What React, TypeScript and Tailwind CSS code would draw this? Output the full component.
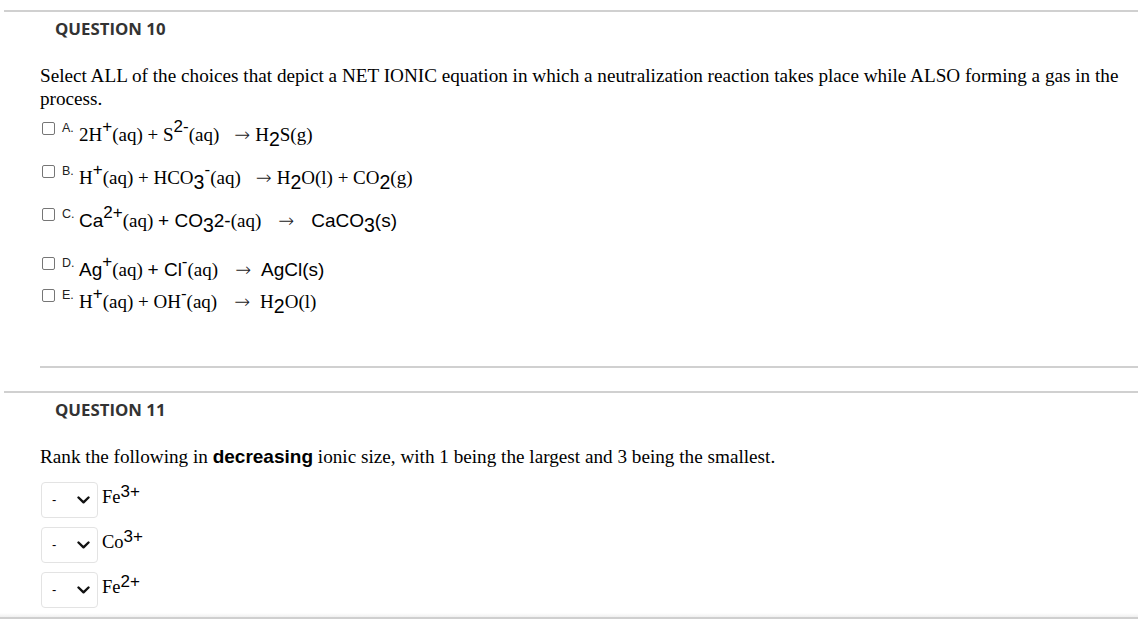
import React from "react";

const serif = { fontFamily: '"Liberation Serif", "Times New Roman", serif' };

function Sup({ children }: { children: React.ReactNode }) {
  return (
    <span className="relative top-[-9px] font-['Liberation_Sans',Arial,sans-serif] text-[17px] leading-none">
      {children}
    </span>
  );
}
function Sub({ children }: { children: React.ReactNode }) {
  return (
    <span className="relative top-[5px] font-['Liberation_Sans',Arial,sans-serif] text-[19.5px] leading-none">
      {children}
    </span>
  );
}
function Arrow({ l, r }: { l: string; r: string }) {
  return (
    <span className={`inline-block font-['DejaVu_Sans',sans-serif] text-[19px] font-extralight leading-none text-[#222] ${l} ${r}`}>→</span>
  );
}
function S({ children }: { children: React.ReactNode }) {
  return <span className="font-['Liberation_Sans',Arial,sans-serif]">{children}</span>;
}

function Option({ letter, children, h }: { letter: string; children: React.ReactNode; h: string }) {
  return (
    <div className={`flex items-start ${h}`}>
      <span className="ml-[2px] mt-[1px] h-[13px] w-[13px] shrink-0 rounded-[2px] border border-[#767676] bg-white" />
      <span className="ml-[7px] mt-[1px] w-[17px] shrink-0 font-['Liberation_Sans',Arial,sans-serif] text-[12.5px] leading-none text-[#222]">
        {letter}
      </span>
      <span className="mt-[4px] whitespace-nowrap text-[19px] leading-[20px] text-black" style={serif}>
        {children}
      </span>
    </div>
  );
}

function Select() {
  return (
    <div className="flex h-[36px] w-[57px] shrink-0 items-center justify-between rounded-[4px] border border-[#e3e3e3] bg-white pl-[10px] pr-[7px]">
      <span className="font-['Liberation_Sans',Arial,sans-serif] text-[13px] text-black">-</span>
      <svg width="13" height="8" viewBox="0 0 13 8">
        <path d="M1.5 1.5 L6.5 6.3 L11.5 1.5" fill="none" stroke="#111" strokeWidth="2.4" strokeLinecap="round" strokeLinejoin="round" />
      </svg>
    </div>
  );
}

export default function App() {
  return (
    <div className="relative h-[619px] w-[1138px] overflow-hidden bg-white">
      <div className="h-[10px]" />
      <div className="ml-[4px] h-[2px] bg-[#d0d0d0]" />
      <div className="pl-[55px] pt-[6px] font-['Open_Sans',sans-serif] text-[16.8px] font-bold leading-[22px] text-[#333]">
        QUESTION 10
      </div>
      <div className="pl-[40px] pt-[24px]">
        <p className="text-[19.2px] leading-[23px] text-black" style={serif}>
          Select ALL of the choices that depict a NET IONIC equation in which a neutralization reaction takes place while ALSO forming a gas in the process.
        </p>
        <div className="mt-[11px]">
          <Option letter="A." h="h-[43px]">
            2H<Sup>+</Sup>(aq) + S<Sup>2-</Sup>(aq)
            <Arrow l="ml-[15px]" r="mr-[5px]" />
            H<Sub>2</Sub>S(g)
          </Option>
          <Option letter="B." h="h-[43px]">
            H<Sup>+</Sup>(aq) + HCO<Sub>3</Sub>
            <Sup>-</Sup>(aq)
            <Arrow l="ml-[15px]" r="mr-[5px]" />
            H<Sub>2</Sub>O(l) + CO<Sub>2</Sub>(g)
          </Option>
          <Option letter="C." h="h-[49px]">
            <S>Ca</S>
            <Sup>2+</Sup>(aq) <S>+ CO</S>
            <Sub>3</Sub>
            <S>2-</S>(aq)
            <Arrow l="ml-[17px]" r="mr-[17px]" />
            <S>CaCO</S>
            <Sub>3</Sub>
            <S>(s)</S>
          </Option>
          <Option letter="D." h="h-[32px]">
            <S>Ag</S>
            <Sup>+</Sup>(aq) <S>+ Cl</S>
            <Sup>-</Sup>(aq)
            <Arrow l="ml-[17px]" r="mr-[10px]" />
            <S>AgCl(s)</S>
          </Option>
          <Option letter="E." h="h-[30px]">
            H<Sup>+</Sup>(aq) + OH<Sup>-</Sup>(aq)
            <Arrow l="ml-[17px]" r="mr-[10px]" />
            H<Sub>2</Sub>O(l)
          </Option>
        </div>
      </div>
      <div className="ml-[40px] mt-[48px] h-[2px] bg-[#d0d0d0]" />
      <div className="ml-[4px] mt-[23px] h-[2px] bg-[#d0d0d0]" />
      <div className="pl-[55px] pt-[6px] font-['Open_Sans',sans-serif] text-[16.8px] font-bold leading-[22px] text-[#333]">
        QUESTION 11
      </div>
      <div className="pl-[40px] pt-[24px]">
        <p className="text-[19.2px] leading-[23px] text-black" style={serif}>
          Rank the following in{" "}
          <b className="font-['Liberation_Sans',Arial,sans-serif] text-[19px] font-bold">decreasing</b> ionic size, with 1 being the largest and 3 being the smallest.
        </p>
        <div className="mt-[14px] flex flex-col gap-[9px] pl-[1px]">
          {[
            ["Fe", "3+"],
            ["Co", "3+"],
            ["Fe", "2+"],
          ].map(([el, ch], i) => (
            <div key={i} className="flex items-start">
              <Select />
              <span className="ml-[4px] mt-[5px] text-[18.5px] leading-[20px] text-black" style={serif}>
                {el}
                <span className="relative top-[-6px] font-['Liberation_Sans',Arial,sans-serif] text-[17px] leading-none">{ch}</span>
              </span>
            </div>
          ))}
        </div>
      </div>
      <div className="absolute bottom-0 left-0 right-0 h-[6px] bg-gradient-to-b from-white to-[#e8e8e8]" />
      <div className="absolute bottom-0 left-0 right-0 h-[2px] bg-[#cfcfcf]" />
    </div>
  );
}
